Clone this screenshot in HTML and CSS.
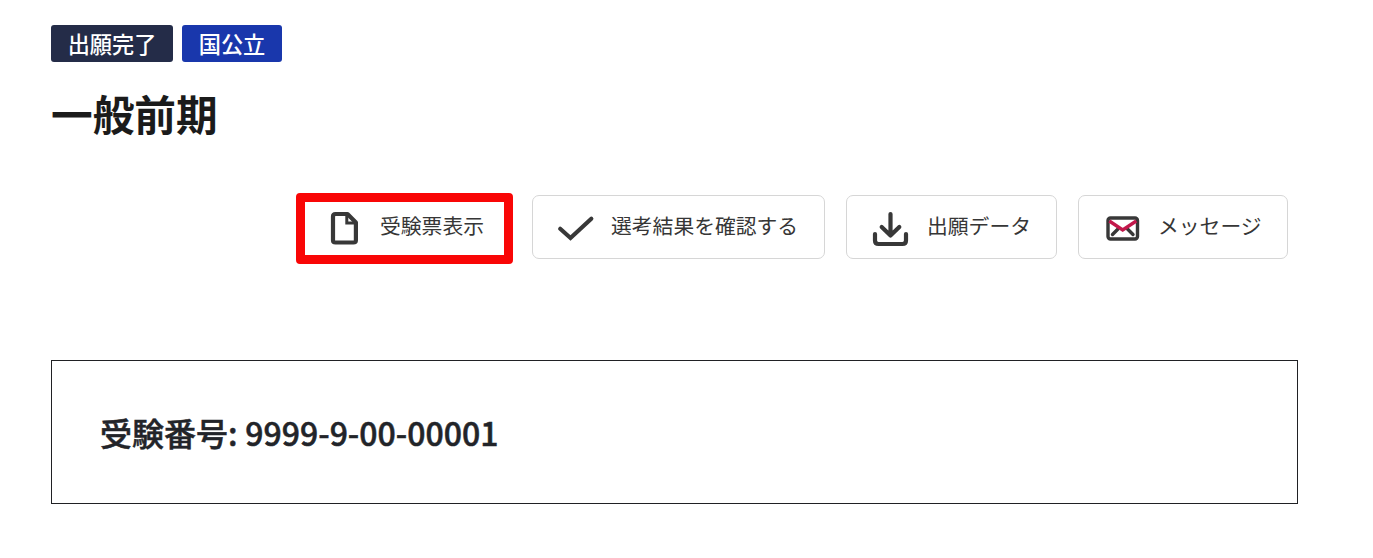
FILE: index.html
```html
<!DOCTYPE html>
<html lang="ja">
<head>
<meta charset="utf-8">
<title>一般前期</title>
<link rel="stylesheet" href="styles.css">
</head>
<body>
<main class="page">
  <div class="tags">
    <span class="tag tag-status">出願完了</span>
    <span class="tag tag-type">国公立</span>
  </div>
  <h1 class="title">一般前期</h1>
  <div class="actions">
    <button class="action action-marked">
      <svg class="icon" viewBox="0 0 40 40"><path d="M10.500 7H22.500L30.900 15.500V33.200Q30.900 35.500 28.400 35.500H10.500Q8 35.500 8 33.200V9.500Q8 7 10.500 7Z"/><path class="thin" d="M21.800 7.500V16H30.500"/></svg>
      <span class="label">受験票表示</span>
    </button>
    <button class="action action-check">
      <svg class="icon" viewBox="0 0 40 40"><path class="square" d="M5.200 21.800L15.500 31L36.300 11.700"/></svg>
      <span class="label">選考結果を確認する</span>
    </button>
    <button class="action action-data">
      <svg class="icon" viewBox="0 0 40 40"><path d="M21.500 7V28M12.700 20L21.500 28.500L30.300 20M6 27V33.500Q6 37 9.500 37H33.500Q37 37 37 33.500V27"/></svg>
      <span class="label">出願データ</span>
    </button>
    <button class="action action-mail">
      <svg class="icon icon-mail" viewBox="0 0 40 40"><rect x="7" y="11" width="29.500" height="21" rx="2.500"/><path d="M11.500 27.500L17 22M26.500 22L32 27.500"/><path class="flap" d="M8.300 14L21.700 23L35.300 14"/></svg>
      <span class="label">メッセージ</span>
    </button>
  </div>
  <section class="number-box">
    <p class="number"><span>受験番号:</span> <span class="digits">9999-9-00-00001</span></p>
  </section>
</main>
</body>
</html>
```
FILE: styles.css
```css
* { box-sizing: border-box; }
body {
  margin: 0;
  background: #fff;
  font-family: "Noto Sans CJK JP", sans-serif;
}
.page { padding: 25px 75px 0 51px; }
.tags { display: flex; gap: 9px; }
.tag {
  height: 37px;
  border-radius: 3px;
  color: #fff;
  font-size: 22.2px;
  font-weight: 500;
  line-height: 36px;
  text-align: center;
}
.tag-status { width: 122px; background: #242c48; }
.tag-type { width: 100px; background: #1937ac; }
.title {
  margin: 21px 0 0;
  color: #1b1b1b;
  font-size: 41.7px;
  font-weight: 700;
  line-height: 60px;
}
.actions {
  display: flex;
  justify-content: flex-end;
  gap: 21px;
  margin-top: 52px;
  padding-right: 10px;
}
.action {
  position: relative;
  display: flex;
  align-items: center;
  gap: 16px;
  height: 64px;
  padding: 0 0 0 22px;
  border: 1px solid #d6d6d6;
  border-radius: 7px;
  background: #fff;
  color: #363636;
  font: 400 20.8px/30px "Noto Sans CJK JP", sans-serif;
}
.action-marked { width: 209px; gap: 15px; }
.action-check { width: 293px; }
.action-data { width: 211px; gap: 18px; }
.action-mail { width: 210px; gap: 17px; }
.action-marked::after {
  content: "";
  position: absolute;
  box-sizing: border-box;
  left: -7px;
  top: -3px;
  width: 217px;
  height: 71px;
  border: 9px solid #f90606;
  border-radius: 4px;
}
.label { padding-bottom: 4px; white-space: nowrap; }
.icon {
  flex: none;
  width: 40px;
  height: 40px;
  fill: none;
  stroke: #383838;
  stroke-width: 4.200;
  stroke-linecap: round;
  stroke-linejoin: round;
}
.icon .thin { stroke-width: 3; stroke-linejoin: miter; }
.icon .square { stroke-linejoin: miter; }
.icon-mail { stroke-width: 3.400; }
.icon .flap { stroke: #c2184b; stroke-linejoin: miter; stroke-linecap: butt; }
.number-box {
  height: 144px;
  margin-top: 101px;
  padding: 47px 48px;
  border: 1px solid #202124;
}
.number {
  margin: 0;
  color: #222429;
  font-size: 32px;
  font-weight: 500;
  line-height: 48px;
  -webkit-text-stroke: 0.5px #222429;
}
.digits { margin-left: 0.5px; }
```
